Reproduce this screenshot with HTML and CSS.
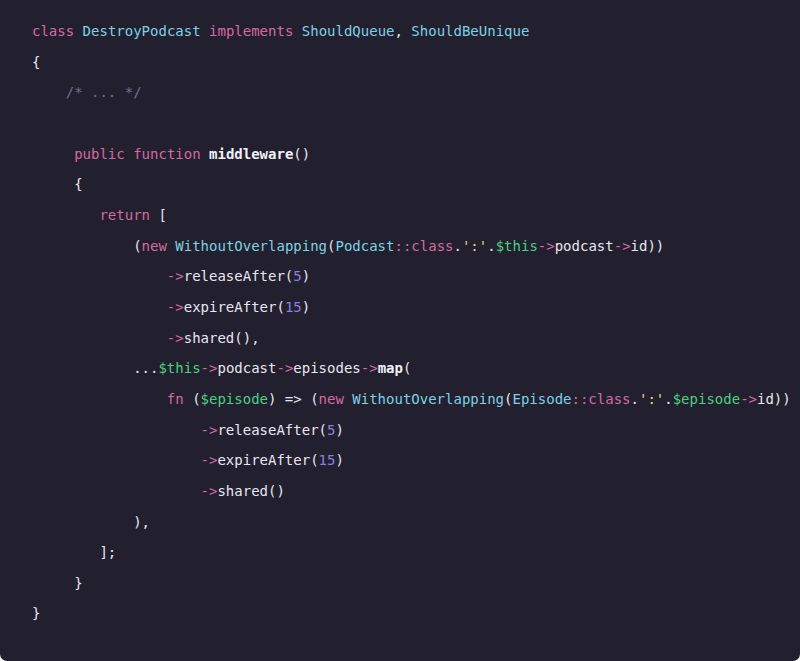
FILE: index.html
```html
<!DOCTYPE html>
<html>
<head>
<meta charset="utf-8">
<link rel="stylesheet" href="styles.css">
</head>
<body>
<div class="code-block">
<pre class="code"><code><span class="k">class</span> <span class="c">DestroyPodcast</span> <span class="k">implements</span> <span class="c">ShouldQueue</span>, <span class="c">ShouldBeUnique</span>
{
    <span class="cm">/* ... */</span>

     <span class="k">public</span> <span class="k">function</span> <span class="fn">middleware</span>()
     {
        <span class="k">return</span> [
            (<span class="k">new</span> <span class="c">WithoutOverlapping</span>(<span class="c">Podcast</span><span class="k">::class</span>.<span class="s">':'</span>.<span class="v">$this</span><span class="k">-&gt;</span>podcast<span class="k">-&gt;</span>id))
                <span class="k">-&gt;</span>releaseAfter(<span class="n">5</span>)
                <span class="k">-&gt;</span>expireAfter(<span class="n">15</span>)
                <span class="k">-&gt;</span>shared(),
            ...<span class="v">$this</span><span class="k">-&gt;</span>podcast<span class="k">-&gt;</span>episodes<span class="k">-&gt;</span><span class="fn">map</span>(
                <span class="k">fn</span> (<span class="v">$episode</span>) =&gt; (<span class="k">new</span> <span class="c">WithoutOverlapping</span>(<span class="c">Episode</span><span class="k">::class</span>.<span class="s">':'</span>.<span class="v">$episode</span><span class="k">-&gt;</span>id))
                    <span class="k">-&gt;</span>releaseAfter(<span class="n">5</span>)
                    <span class="k">-&gt;</span>expireAfter(<span class="n">15</span>)
                    <span class="k">-&gt;</span>shared()
            ),
        ];
     }
}</code></pre>
</div>
</body>
</html>
```

FILE: styles.css
```css
html, body {
  margin: 0;
  padding: 0;
  background: #ffffff;
}

.code-block {
  width: 800px;
  height: 661px;
  box-sizing: border-box;
  background: #22202f;
  border-radius: 0 0 7px 7px;
  padding: 16px 0 0 32px;
  overflow: hidden;
}

.code {
  margin: 0;
  font-family: "DejaVu Sans Mono", "Liberation Mono", monospace;
  font-size: 14px;
  line-height: 30.65px;
  color: #e8e6f0;
  white-space: pre;
}

.k { color: #d46aa0; }
.c { color: #7fd0e2; }
.cm { color: #726e90; }
.fn { color: #f2f0f8; font-weight: bold; }
.s { color: #e8d888; }
.v { color: #4ccf82; }
.n { color: #8c7fe0; }
```
